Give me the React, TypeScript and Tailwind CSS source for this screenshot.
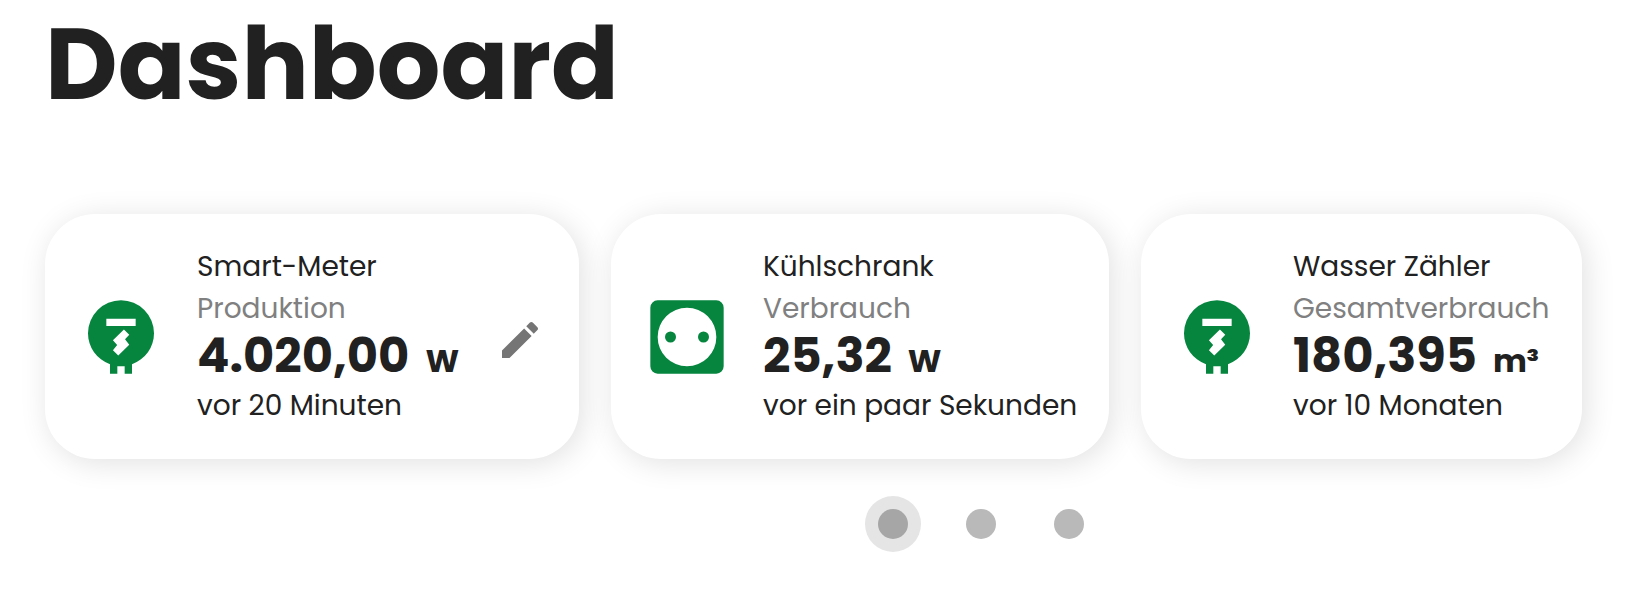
import type { ReactNode } from "react";

function MeterIcon() {
  return (
    <svg viewBox="0 0 24 24" className="size-[88px] shrink-0 fill-[#06853f]">
      <path
        fillRule="evenodd"
        d="M12 2a9 9 0 0 0-9 9c0 3.83 2.4 7.1 6 8.4V22h2v-2h2v2h2v-2.6c3.6-1.3 6-4.57 6-8.4a9 9 0 0 0-9-9zM8 7h8v2H8zM12.8 9.95l1.45 1.45-1.15 1.2 1.15 1.5-3 2.95-1.45-1.45 1.15-1.45-1.15-1.25z"
      />
    </svg>
  );
}

function SocketIcon() {
  return (
    <svg viewBox="0 0 24 24" className="size-[88px] shrink-0 fill-[#06853f]">
      <path
        fillRule="evenodd"
        d="M4 2h16a2 2 0 0 1 2 2v16a2 2 0 0 1-2 2H4a2 2 0 0 1-2-2V4a2 2 0 0 1 2-2zM12 4a8 8 0 1 0 0 16 8 8 0 0 0 0-16z"
      />
      <circle cx="7.5" cy="12" r="1.5" />
      <circle cx="16.5" cy="12" r="1.5" />
    </svg>
  );
}

function EditIcon() {
  return (
    <svg viewBox="0 0 24 24" className="size-12 fill-[#757575]">
      <path d="M3 17.25V21h3.75L17.81 9.94l-3.75-3.75L3 17.25zM20.71 7.04c.39-.39.39-1.02 0-1.41l-2.34-2.34c-.39-.39-1.02-.39-1.41 0l-1.83 1.83 3.75 3.75 1.83-1.83z" />
    </svg>
  );
}

type CardProps = {
  width: string;
  icon: ReactNode;
  name: ReactNode;
  kind: ReactNode;
  value: ReactNode;
  unit: ReactNode;
  age: ReactNode;
  action?: ReactNode;
};

function Card({ width, icon, name, kind, value, unit, age, action }: CardProps) {
  return (
    <section
      className={`${width} flex h-[245px] shrink-0 items-center rounded-[50px] bg-white pl-8 shadow-[4px_4px_30px_rgba(0,0,0,0.12)]`}
    >
      {icon}
      <div className="ml-8 mt-[2px] flex h-[183px] flex-col whitespace-nowrap text-[28px] leading-[42px]">
        <div>{name}</div>
        <div className="text-[#808080]">{kind}</div>
        <div className="flex h-[55px] items-baseline font-bold">
          <span className="text-[48px] leading-[52px]">{value}</span>
          <span className="ml-4 text-[32px] leading-none">{unit}</span>
        </div>
        <div>{age}</div>
      </div>
      {action && <button className="ml-auto mr-[35px] mt-[7px]">{action}</button>}
    </section>
  );
}

export default function App() {
  return (
    <main className="h-[608px] w-[1640px] overflow-hidden bg-white pl-[45px] font-['Poppins','Inter',sans-serif] text-[#212121]">
      <h1 className="h-[214px] pt-1 text-[100px] font-bold leading-[120px]">Dashboard</h1>
      <div className="flex gap-8">
        <Card
          width="w-[534px]"
          icon={<MeterIcon />}
          name="Smart-Meter"
          kind="Produktion"
          value="4.020,00"
          unit="W"
          age="vor 20 Minuten"
          action={<EditIcon />}
        />
        <Card
          width="w-[498px]"
          icon={<SocketIcon />}
          name="Kühlschrank"
          kind="Verbrauch"
          value="25,32"
          unit="W"
          age="vor ein paar Sekunden"
        />
        <Card
          width="w-[441px]"
          icon={<MeterIcon />}
          name="Wasser Zähler"
          kind="Gesamtverbrauch"
          value="180,395"
          unit="m³"
          age="vor 10 Monaten"
        />
      </div>
      <nav className="ml-[820px] mt-[37px] flex items-center gap-[58px]">
        <button className="-mr-[13px] flex size-14 items-center justify-center rounded-full bg-[#e5e5e5]">
          <span className="size-[30px] rounded-full bg-[#a6a6a6]" />
        </button>
        <button className="size-[30px] rounded-full bg-[#b9b9b9]" />
        <button className="size-[30px] rounded-full bg-[#b9b9b9]" />
      </nav>
    </main>
  );
}
